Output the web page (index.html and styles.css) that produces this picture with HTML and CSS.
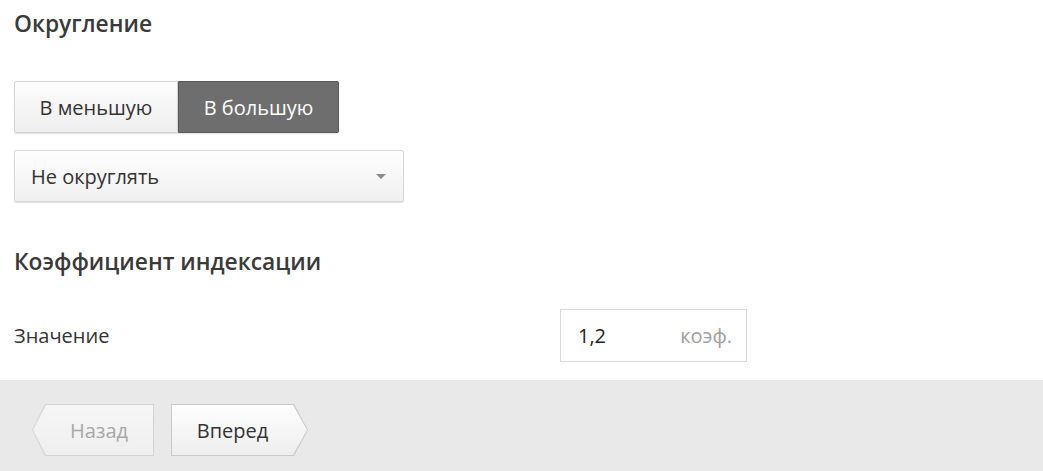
FILE: index.html
```html
<!DOCTYPE html>
<html lang="ru">
<head>
<meta charset="utf-8">
<link rel="stylesheet" href="styles.css">
</head>
<body>
<main class="content">
  <h2 class="title">Округление</h2>
  <div class="segmented">
    <button class="seg">В меньшую</button>
    <button class="seg seg-active">В большую</button>
  </div>
  <div class="select">
    <span>Не округлять</span>
    <span class="caret"></span>
  </div>
  <h2 class="title title-2">Коэффициент индексации</h2>
  <div class="row">
    <span class="label">Значение</span>
    <div class="field">
      <span class="value">1,2</span>
      <span class="unit">коэф.</span>
    </div>
  </div>
</main>
<footer class="footer">
  <div class="nav nav-back"><div class="nav-inner">Назад</div></div>
  <div class="nav nav-next"><div class="nav-inner">Вперед</div></div>
</footer>
</body>
</html>
```

FILE: styles.css
```css
* { box-sizing: border-box; }
html, body { margin: 0; padding: 0; background: #fff; }
body {
  font-family: "Open Sans", "Liberation Sans", sans-serif;
  color: #333;
  width: 1043px;
  height: 471px;
  overflow: hidden;
}
.content {
  padding: 9px 14px 0 14px;
  height: 380px;
}
.title {
  margin: 0;
  font-size: 22.8px;
  font-weight: 600;
  line-height: 30px;
  color: #3a3a3a;
}
.segmented {
  display: flex;
  width: 325px;
  height: 52px;
  margin-top: 42px;
}
.seg {
  font-family: inherit;
  font-size: 20px;
  color: #333;
  border: 1px solid #d4d4d4;
  background: linear-gradient(#fdfdfd, #eeeeee);
  box-shadow: 0 1px 1px rgba(0,0,0,0.12);
  width: 164px;
  height: 52px;
  padding: 0;
  border-radius: 2px 0 0 2px;
}
.seg-active {
  width: 161px;
  background: #6e6e6e;
  border-color: #5a5a5a;
  color: #fff;
  border-radius: 0 2px 2px 0;
}
.select {
  margin-top: 17px;
  width: 390px;
  height: 52px;
  border: 1px solid #d8d8d8;
  border-radius: 2px;
  background: linear-gradient(#fefefe, #f0f0f0);
  box-shadow: 0 1px 1px rgba(0,0,0,0.12);
  display: flex;
  align-items: center;
  justify-content: space-between;
  padding: 0 17px 0 16px;
  font-size: 20px;
  color: #333;
}
.caret {
  width: 0;
  height: 0;
  border-left: 5px solid transparent;
  border-right: 5px solid transparent;
  border-top: 5px solid #8a8a8a;
}
.title-2 { margin-top: 45px; }
.row {
  display: flex;
  justify-content: space-between;
  align-items: center;
  width: 733px;
  margin-top: 32px;
}
.label { font-size: 20px; color: #333; }
.field {
  width: 187px;
  height: 53px;
  border: 1px solid #d9d9d9;
  display: flex;
  align-items: center;
  justify-content: space-between;
  padding: 0 14px 0 17px;
  font-size: 20px;
}
.value { color: #222; }
.unit { color: #a0a0a0; }
.footer {
  height: 91px;
  background: #e9e9e9;
  display: flex;
  gap: 17px;
  padding: 24px 0 0 32px;
}
.nav {
  height: 52px;
  padding: 1px;
  background: #c9c9c9;
}
.nav-inner {
  height: 100%;
  display: flex;
  align-items: center;
  justify-content: center;
  font-size: 20px;
}
.nav-back {
  width: 122px;
  clip-path: polygon(13px 0, 100% 0, 100% 100%, 13px 100%, 0 50%);
  background: #d4d4d4;
}
.nav-back .nav-inner {
  clip-path: polygon(13px 0, 100% 0, 100% 100%, 13px 100%, 0 50%);
  background: linear-gradient(#f6f6f6, #efefef);
  color: #a8a8a8;
  padding-left: 12px;
}
.nav-next {
  width: 137px;
  clip-path: polygon(0 0, calc(100% - 14px) 0, 100% 50%, calc(100% - 14px) 100%, 0 100%);
}
.nav-next .nav-inner {
  clip-path: polygon(0 0, calc(100% - 14px) 0, 100% 50%, calc(100% - 14px) 100%, 0 100%);
  background: linear-gradient(#fefefe, #eeeeee);
  color: #333;
  padding-right: 14px;
}
```
